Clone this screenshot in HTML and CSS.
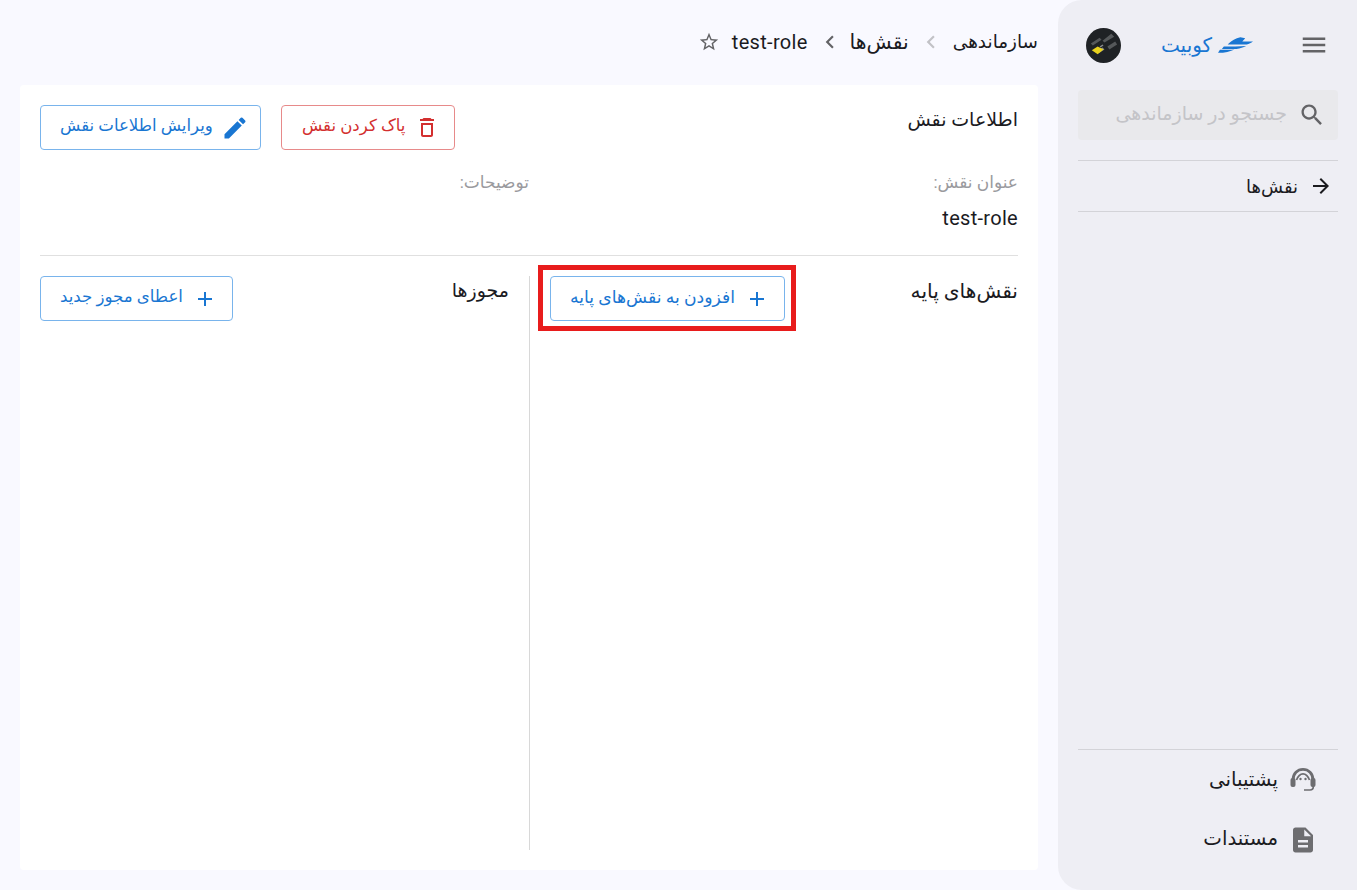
FILE: index.html
```html
<!DOCTYPE html>
<html lang="fa" dir="rtl">
<head>
  <meta charset="UTF-8" />
  <meta name="viewport" content="width=device-width, initial-scale=1.0"/>
  <title>test-role</title>
  <link rel="stylesheet" href="styles.css">
</head>
<body>
  <div class="layout">
    <aside class="sidebar">
      <div class="side-top">
        <svg class="menu-icon" viewBox="0 0 24 24"><path d="M3 18h18v-2H3zm0-5h18v-2H3zm0-7v2h18V6z"/></svg>
        <div class="logo">
          <svg class="logo-ship" viewBox="0 0 36 16"><path d="M11 6.500C14 3.500 18 1 23 0l5 1-3 3.500h11c-2 1.500-4 2.500-6.500 3H10zM6 9.500c8 0 16 0 23-.5-3 1.500-6 2.500-10 3H4zM2 13c6 0 11 0 15-.5-4 2-10 3.500-17 3.500z"/></svg>
          <span>کوبیت</span>
        </div>
        <svg class="avatar" viewBox="0 0 36 36">
          <circle cx="18" cy="18" r="18" fill="#1f2225"/>
          <path d="M5 16 14 10l2 2-9 6zM17 13l9-7 3 3-10 6zM22 19l8-5 2 3-8 5z" fill="#55585a"/>
          <path d="M14 19l3-2 1 1-3 2zM12 23l5-3 2 2-6 4z" fill="#8a8c8e"/>
          <path d="M6 23l6-4 6 3-6 5z" fill="#e9d21d"/>
        </svg>
      </div>
      <div class="search">
        <svg class="search-icon" viewBox="0 0 24 24"><path d="M15.500 14h-.79l-.28-.27C15.410 12.590 16 11.110 16 9.500 16 5.910 13.090 3 9.500 3S3 5.910 3 9.500 5.910 16 9.500 16c1.610 0 3.090-.59 4.230-1.570l.27.28v.79l5 4.990L20.490 19zm-6 0C7.010 14 5 11.990 5 9.500S7.010 5 9.500 5 14 7.010 14 9.500 11.990 14 9.500 14"/></svg>
        <span class="lift">جستجو در سازماندهی</span>
      </div>
      <nav class="side-nav">
        <a class="side-link">
          <svg class="arrow-icon" viewBox="0 0 24 24"><path d="M20 11H7.830l5.590-5.590L12 4l-8 8 8 8 1.410-1.410L7.830 13H20z" transform="matrix(-1 0 0 1 24 0)"/></svg>
          <span>نقش‌ها</span>
        </a>
      </nav>
      <div class="side-bottom">
        <a class="bottom-link">
          <svg class="bottom-icon" viewBox="0 0 30 30">
            <path class="headset" d="M5 15C5 8.500 9.500 4.300 15 4.300s10 4.200 10 10.700"/>
            <path class="headset-thin" d="M8.500 15C10 11 12.500 8.800 15 8.800s5 2.200 6.500 6.200M25.300 20v1.500c0 2-1.300 3.500-3.300 3.500h-6"/>
            <rect x="2.500" y="13" width="5" height="9" rx="2"/>
            <rect x="22.500" y="13" width="5" height="9" rx="2"/>
            <circle cx="12.500" cy="14" r="1.200"/>
            <circle cx="17.500" cy="14" r="1.200"/>
          </svg>
          <span class="lift-sm">پشتیبانی</span>
        </a>
        <a class="bottom-link">
          <svg class="bottom-icon" viewBox="0 0 24 24"><path d="M14 2H6c-1.100 0-2 .9-2 2v16c0 1.100.9 2 2 2h12c1.100 0 2-.9 2-2V8zm2 16H8v-2h8zm0-4H8v-2h8zm-3-5V3.500L18.500 9z"/></svg>
          <span class="lift">مستندات</span>
        </a>
      </div>
    </aside>

    <main class="main">
      <div class="breadcrumb">
        <span>سازماندهی</span>
        <svg class="chev chev-light" viewBox="0 0 24 24"><path d="M15.410 7.410 14 6l-6 6 6 6 1.410-1.410L10.830 12z"/></svg>
        <span class="crumb-roles">نقش‌ها</span>
        <svg class="chev" viewBox="0 0 24 24"><path d="M15.410 7.410 14 6l-6 6 6 6 1.410-1.410L10.830 12z"/></svg>
        <span class="latin">test-role</span>
        <svg class="star" viewBox="0 0 24 24"><path d="m22 9.240-7.190-.62L12 2 9.190 8.630 2 9.240l5.460 4.730L5.820 21 12 17.270 18.180 21l-1.630-7.030zM12 15.400l-3.760 2.270 1-4.280-3.320-2.880 4.380-.38L12 6.100l1.710 4.040 4.380.38-3.320 2.880 1 4.280z"/></svg>
      </div>

      <section class="card">
        <div class="card-head">
          <h3>اطلاعات نقش</h3>
          <div class="actions">
            <button class="btn btn-red">
              <svg class="trash" viewBox="0 0 24 24"><path d="M15.500 2h-7l-1 1H5v2h14V3h-2.500zM6 7v12c0 1.100.9 2 2 2h8c1.100 0 2-.9 2-2V7zm2 2h8v10H8z"/></svg>
              <span class="btn-label">پاک کردن نقش</span>
            </button>
            <button class="btn">
              <svg class="pencil" viewBox="0 0 24 24"><path d="M3 17.250V21h3.750L17.810 9.940l-3.750-3.750zM20.710 7.040c.39-.39.39-1.020 0-1.410l-2.340-2.340a.996.996 0 0 0-1.410 0l-1.830 1.830 3.750 3.750z"/></svg>
              <span class="btn-label">ویرایش اطلاعات نقش</span>
            </button>
          </div>
        </div>

        <div class="fields">
          <div class="field">
            <div class="field-label">عنوان نقش:</div>
            <div class="field-value">test-role</div>
          </div>
          <div class="field">
            <div class="field-label">توضیحات:</div>
          </div>
        </div>

        <div class="sections">
          <div class="section section-base">
            <h3 class="title-base">نقش‌های پایه</h3>
            <div class="btn-wrap">
              <button class="btn btn-base">
                <svg viewBox="0 0 24 24"><path d="M19 13h-6v6h-2v-6H5v-2h6V5h2v6h6z"/></svg>
                <span class="btn-label">افزودن به نقش‌های پایه</span>
              </button>
              <div class="highlight"></div>
            </div>
          </div>
          <div class="section">
            <h3>مجوزها</h3>
            <button class="btn">
              <svg viewBox="0 0 24 24"><path d="M19 13h-6v6h-2v-6H5v-2h6V5h2v6h6z"/></svg>
              <span class="btn-label">اعطای مجوز جدید</span>
            </button>
          </div>
        </div>
      </section>
    </main>
  </div>
</body>
</html>
```

FILE: styles.css
```css
* {
  box-sizing: border-box;
}

html, body {
  height: 100%;
}

body {
  margin: 0;
  background-color: #f9f9ff;
  color: #1b1b1f;
  font-family: Roboto, "Noto Sans", "DejaVu Sans", sans-serif;
  font-size: 16px;
  overflow: hidden;
}

.layout {
  display: flex;
  height: 890px;
}

.lift {
  padding-bottom: 3px;
}

.lift-sm {
  padding-bottom: 1px;
}

/* Sidebar */
.sidebar {
  width: 299px;
  flex: none;
  display: flex;
  flex-direction: column;
  background-color: #eeeef4;
  border-radius: 24px 0 0 24px;
  padding: 0 19px 20px 20px;
}

.side-top {
  display: flex;
  align-items: center;
  justify-content: space-between;
  height: 90px;
}

.menu-icon {
  width: 30px;
  height: 30px;
  margin-right: 9px;
  fill: #636366;
}

.logo {
  display: flex;
  align-items: center;
  gap: 6px;
  margin-right: 6px;
  color: #1976d2;
  font-size: 20px;
  font-weight: 500;
}

.logo-ship {
  width: 35px;
  height: 16px;
  fill: #1976d2;
}

.avatar {
  width: 35px;
  height: 35px;
  margin-left: 8px;
}

.search {
  display: flex;
  align-items: center;
  gap: 11px;
  height: 50px;
  padding: 0 12px;
  background-color: #e9e9ec;
  border-radius: 4px;
  color: #c4c4c8;
  font-size: 19px;
}

.search-icon {
  width: 28px;
  height: 28px;
  fill: #636366;
}

.side-nav {
  margin-top: 20px;
  border-top: 1px solid #d3d3d8;
  border-bottom: 1px solid #d3d3d8;
}

.side-link {
  display: flex;
  align-items: center;
  gap: 11px;
  height: 50px;
  padding-right: 5px;
  font-size: 18px;
}

.arrow-icon {
  width: 24px;
  height: 24px;
  fill: #1b1b1f;
}

.side-bottom {
  margin-top: auto;
  border-top: 1px solid #d3d3d8;
}

.bottom-link {
  display: flex;
  align-items: center;
  gap: 10px;
  height: 60px;
  padding-right: 20px;
  font-size: 19.800px;
}

.bottom-icon {
  width: 30px;
  height: 30px;
  fill: #6d6d70;
}

.headset {
  fill: none;
  stroke: #6d6d70;
  stroke-width: 2.800;
}

.headset-thin {
  fill: none;
  stroke: #6d6d70;
  stroke-width: 1.700;
}

/* Main area */
.main {
  flex: 1;
  display: flex;
  flex-direction: column;
  padding: 0 20px 20px;
}

.breadcrumb {
  display: flex;
  align-items: center;
  gap: 9px;
  height: 85px;
  padding-bottom: 2px;
  font-size: 18.400px;
}

.crumb-roles {
  margin-left: -2px;
  font-size: 20.500px;
}

.chev {
  width: 26px;
  height: 26px;
  fill: #636366;
}

.chev-light {
  fill: #c2c2c6;
}

.star {
  width: 22px;
  height: 22px;
  margin-right: 3px;
  fill: #636366;
}

.latin {
  direction: ltr;
  font-size: 20px;
  letter-spacing: .3px;
}

.card {
  flex: 1;
  display: flex;
  flex-direction: column;
  background-color: #fff;
  border-radius: 4px;
  padding: 20px;
}

.card-head {
  display: flex;
  align-items: flex-start;
  justify-content: space-between;
}

h3 {
  margin: 0;
  font-size: 19px;
  font-weight: 500;
  line-height: 30px;
}

.title-base {
  font-size: 20.200px;
}

.actions {
  display: flex;
  gap: 20px;
}

.btn {
  display: inline-flex;
  align-items: center;
  gap: 10px;
  height: 45px;
  padding: 0 15px 0 19px;
  background: #fff;
  border: 1px solid #79b4ec;
  border-radius: 4px;
  color: #1976d2;
  font-family: inherit;
  font-size: 16.600px;
  font-weight: 500;
  white-space: nowrap;
}

.btn-base {
  font-size: 17.200px;
}

.btn-label {
  padding-bottom: 4px;
}

.btn svg {
  width: 24px;
  height: 24px;
  fill: currentColor;
}

.btn .pencil {
  width: 28px;
  height: 28px;
  margin: 0 -4px 0 -2px;
}

.btn-red {
  padding-left: 20px;
  border-color: #e78a8a;
  color: #d32f2f;
}

.fields {
  display: grid;
  grid-template-columns: 1fr 1fr;
  height: 106px;
  padding-top: 21px;
  border-bottom: 1px solid #e0e0e0;
}

.field-label {
  color: #9a9a9e;
  font-size: 17px;
  line-height: 22px;
}

.field-value {
  margin-top: 13px;
  font-size: 20px;
  letter-spacing: .3px;
  line-height: 24px;
}

.sections {
  flex: 1;
  display: grid;
  grid-template-columns: 1fr 1fr;
  padding-top: 20px;
}

.section {
  display: flex;
  align-items: flex-start;
  justify-content: space-between;
  padding-right: 20px;
}

.section-base {
  padding: 0 0 0 20px;
  border-left: 1px solid #d8d8d8;
}

.btn-wrap {
  position: relative;
}

.highlight {
  position: absolute;
  top: -11px;
  left: -12px;
  right: -11px;
  bottom: -10px;
  border: 5px solid #e81c1c;
  pointer-events: none;
}
```
